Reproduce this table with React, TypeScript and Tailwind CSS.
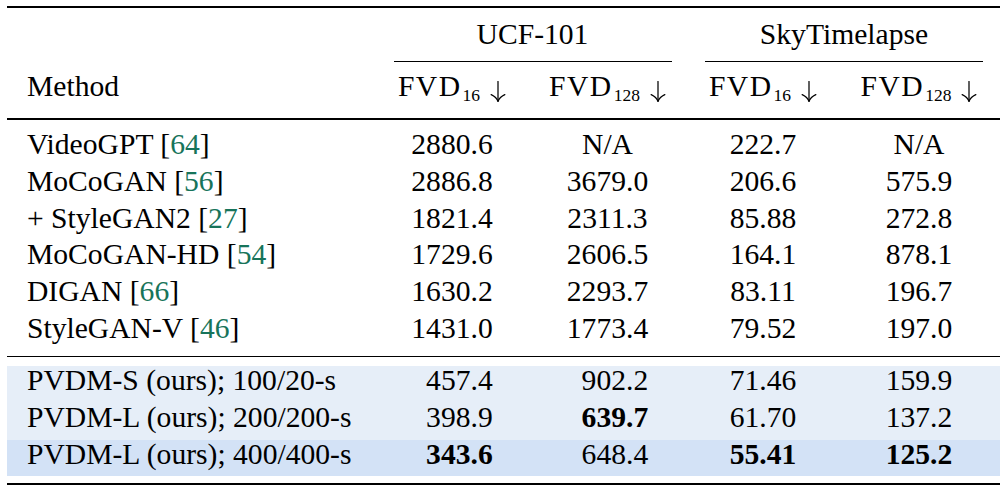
import React from "react";

type Cell = { v: string; b?: boolean; ph?: boolean };

const baseline: { name: string; cite: string; cells: Cell[] }[] = [
  { name: "VideoGPT", cite: "64", cells: [{ v: "2880.6" }, { v: "N/A" }, { v: "222.7" }, { v: "N/A" }] },
  { name: "MoCoGAN", cite: "56", cells: [{ v: "2886.8" }, { v: "3679.0" }, { v: "206.6" }, { v: "575.9" }] },
  { name: "+ StyleGAN2", cite: "27", cells: [{ v: "1821.4" }, { v: "2311.3" }, { v: "85.88" }, { v: "272.8" }] },
  { name: "MoCoGAN-HD", cite: "54", cells: [{ v: "1729.6" }, { v: "2606.5" }, { v: "164.1" }, { v: "878.1" }] },
  { name: "DIGAN", cite: "66", cells: [{ v: "1630.2" }, { v: "2293.7" }, { v: "83.11" }, { v: "196.7" }] },
  { name: "StyleGAN-V", cite: "46", cells: [{ v: "1431.0" }, { v: "1773.4" }, { v: "79.52" }, { v: "197.0" }] },
];

const ours: { name: string; bg: string; cells: Cell[] }[] = [
  {
    name: "PVDM-S (ours); 100/20-s",
    bg: "bg-[#e6eef8]",
    cells: [{ v: "457.4", ph: true }, { v: "902.2", ph: true }, { v: "71.46" }, { v: "159.9" }],
  },
  {
    name: "PVDM-L (ours); 200/200-s",
    bg: "bg-[#e6eef8]",
    cells: [{ v: "398.9", ph: true }, { v: "639.7", ph: true, b: true }, { v: "61.70" }, { v: "137.2" }],
  },
  {
    name: "PVDM-L (ours); 400/400-s",
    bg: "bg-[#d3e2f6]",
    cells: [{ v: "343.6", ph: true, b: true }, { v: "648.4", ph: true }, { v: "55.41", b: true }, { v: "125.2", b: true }],
  },
];

function Arrow() {
  return (
    <svg
      width="16"
      height="21"
      viewBox="0 0 16 21"
      className="inline-block align-[-6px] ml-[10px]"
      fill="none"
      stroke="#000"
      strokeWidth="1.25"
      strokeLinecap="round"
    >
      <path d="M8 0.6 V20.2" />
      <path d="M1.2 13.6 C4.6 15.2 7 17.6 8 20.4 C9 17.6 11.4 15.2 14.8 13.6" />
    </svg>
  );
}

function FVD({ sub }: { sub: string }) {
  return (
    <span className="whitespace-nowrap">
      <span className="tracking-[1.5px]">FVD</span>
      <span className="text-[17.5px] leading-none align-[-5px] ml-[1px]">{sub}</span>
      <Arrow />
    </span>
  );
}

function Num({ c }: { c: Cell }) {
  return (
    <div className={`text-center ${c.b ? "font-bold" : ""}`}>
      {c.ph && <span className="invisible">0</span>}
      {c.v}
    </div>
  );
}

const cols = "grid grid-cols-[370px_150px_161px_150px_162px]";

export default function App() {
  return (
    <div className="w-[1006px] h-[492px] bg-white pt-[6px] pl-[7px] font-['Liberation_Serif',serif] text-black text-[29.6px] leading-[29.43px]">
      <div className="w-[993px]">
        <div className="h-[2px] bg-black" />

        <div className="mt-[11.6px] grid grid-cols-[370px_311px_312px]">
          <div />
          <div className="text-center">UCF-101</div>
          <div className="text-center">SkyTimelapse</div>
        </div>

        <div className="mt-[12px] grid grid-cols-[370px_311px_312px]">
          <div />
          <div className="ml-[17px] mr-[16px] h-px bg-black" />
          <div className="mx-[17px] h-px bg-black" />
        </div>

        <div className={`mt-[10px] ${cols}`}>
          <div className="pl-[20px]">Method</div>
          <div className="text-center">
            <FVD sub="16" />
          </div>
          <div className="text-center">
            <FVD sub="128" />
          </div>
          <div className="text-center">
            <FVD sub="16" />
          </div>
          <div className="text-center">
            <FVD sub="128" />
          </div>
        </div>

        <div className="mt-[13.6px] h-[1.5px] bg-black" />

        <div className="mt-[10.8px]">
          {baseline.map((r) => (
            <div key={r.name} className={`${cols} h-[36.67px]`}>
              <div className="pl-[20px] whitespace-nowrap">
                {r.name} [<span className="text-[#17745a]">{r.cite}</span>]
              </div>
              {r.cells.map((c, i) => (
                <Num key={i} c={c} />
              ))}
            </div>
          ))}
        </div>

        <div className="mt-[5.2px] h-[1.5px] bg-black" />

        <div className="mt-[9.3px]">
          {ours.map((r) => (
            <div key={r.name} className={`${cols} h-[36.67px] ${r.bg}`}>
              <div className="pl-[20px] whitespace-nowrap">{r.name}</div>
              {r.cells.map((c, i) => (
                <Num key={i} c={c} />
              ))}
            </div>
          ))}
        </div>

        <div className="mt-[6.7px] h-[2px] bg-black" />
      </div>
    </div>
  );
}
